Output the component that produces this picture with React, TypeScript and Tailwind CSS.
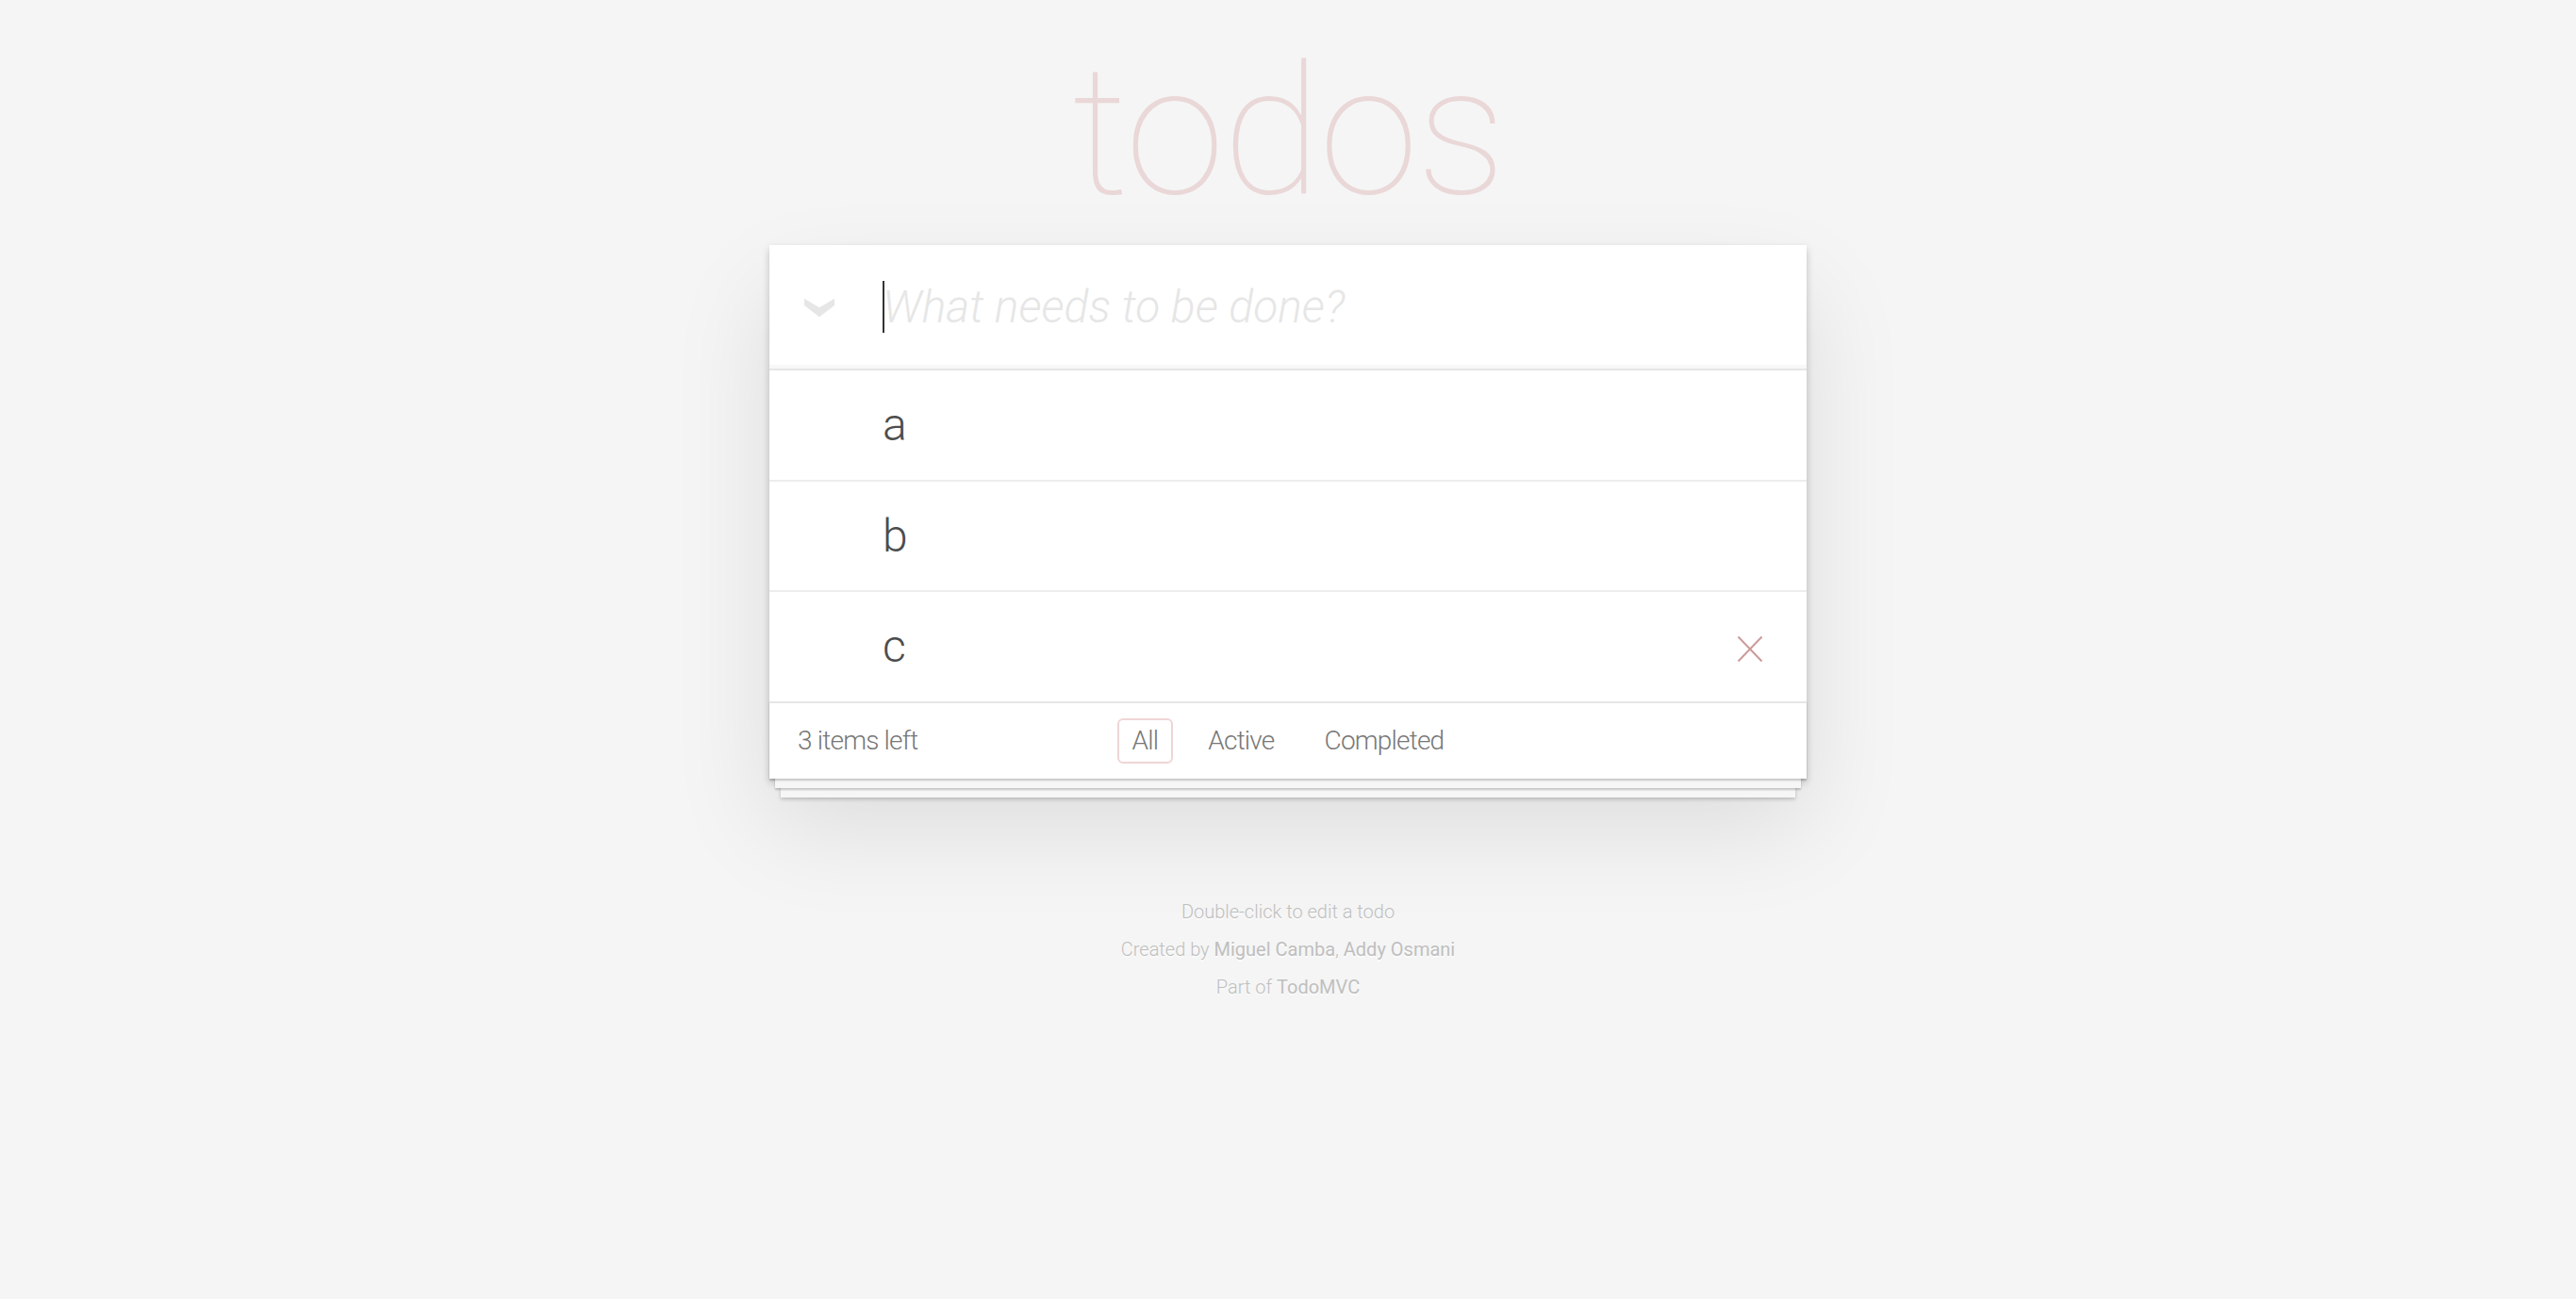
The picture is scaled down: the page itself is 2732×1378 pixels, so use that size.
import { useState } from "react";

type Todo = { id: number; title: string };

const initialTodos: Todo[] = [
  { id: 1, title: "a" },
  { id: 2, title: "b" },
  { id: 3, title: "c" },
];

function ToggleAll() {
  return (
    <svg width="32" height="21" viewBox="0 0 32 21" className="block">
      <polygon points="0,0.7 16,10.3 32,0.7 32,8 16,20.3 0,8" fill="#e6e6e6" />
    </svg>
  );
}

function DestroyIcon() {
  return (
    <svg width="26" height="27" viewBox="0 0 26 27" className="block">
      <line x1="0.5" y1="0.5" x2="25.5" y2="26.5" stroke="#cc9a9a" strokeWidth="2" />
      <line x1="25.5" y1="0.5" x2="0.5" y2="26.5" stroke="#cc9a9a" strokeWidth="2" />
    </svg>
  );
}

export default function App() {
  const [todos] = useState(initialTodos);
  const [filter, setFilter] = useState("All");
  const hoveredId = 3;

  return (
    <div className="min-h-screen bg-[#f5f5f5] [font-family:Roboto,Helvetica,Arial,sans-serif] font-light text-[#4d4d4d] text-[28px] leading-[39.2px]">
      <div className="mx-auto w-[1100px] pt-[45px]">
        <h1 className="mb-[24px] text-center text-[191px] leading-[191px] font-thin tracking-[-2px] text-[rgba(175,47,47,0.15)]">
          todos
        </h1>

        <section className="bg-white shadow-[0_4px_8px_0_rgba(0,0,0,0.2),0_50px_100px_0_rgba(0,0,0,0.1)]">
          {/* New todo */}
          <header className="flex h-[131px] items-center shadow-[inset_0_-4px_2px_rgba(0,0,0,0.03)]">
            <div className="w-[120px] pl-[37px] pt-[2px]">
              <ToggleAll />
            </div>
            <div className="relative h-full flex-1">
              <input
                className="h-full w-full bg-transparent pr-[32px] text-[48px] leading-[67.2px] outline-none placeholder:italic placeholder:font-light placeholder:text-[#e6e6e6]"
                placeholder="What needs to be done?"
              />
              <span className="absolute left-0 top-[38px] h-[55px] w-[2px] bg-[#333]" />
            </div>
          </header>

          {/* List */}
          <ul className="border-t-2 border-[#e6e6e6]">
            {todos.map((todo) => (
              <li key={todo.id} className="flex items-center border-b-2 border-[#ededed] last:border-b-0">
                <label className="flex-1 py-[29px] pl-[120px] text-[48px] leading-[57.6px] text-[#4d4d4d]">
                  {todo.title}
                </label>
                {todo.id === hoveredId && (
                  <button className="mr-[20px] flex h-[80px] w-[80px] items-center justify-center pt-[5px]">
                    <DestroyIcon />
                  </button>
                )}
              </li>
            ))}
          </ul>

          {/* Footer */}
          <footer className="grid h-[82px] grid-cols-[1fr_auto_1fr] items-center border-t-2 border-[#e6e6e6] px-[30px] tracking-[-0.8px] text-[#777] shadow-[0_2px_2px_rgba(0,0,0,0.2),0_16px_0_-6px_#f6f6f6,0_18px_2px_-6px_rgba(0,0,0,0.2),0_32px_0_-12px_#f6f6f6,0_34px_4px_-12px_rgba(0,0,0,0.2)]">
            <span className="text-left">{todos.length} items left</span>
            <ul className="flex gap-[9px]">
              {["All", "Active", "Completed"].map((f) => (
                <li key={f}>
                  <a
                    href="#"
                    onClick={(e) => {
                      e.preventDefault();
                      setFilter(f);
                    }}
                    className={
                      "m-[6px] block rounded-[6px] border-2 px-[14px] py-[6px] leading-[32px] " +
                      (filter === f ? "border-[rgba(175,47,47,0.2)]" : "border-transparent")
                    }
                  >
                    {f}
                  </a>
                </li>
              ))}
            </ul>
            <span />
          </footer>
        </section>

        {/* Info */}
        <footer className="mt-[131px] flex flex-col gap-[20px] text-center text-[20px] leading-[20px] text-[#bfbfbf] [text-shadow:0_2px_0_rgba(255,255,255,0.5)]">
          <p>Double-click to edit a todo</p>
          <p>
            Created by <a href="#" className="font-normal">Miguel Camba</a>, <a href="#" className="font-normal">Addy Osmani</a>
          </p>
          <p>
            Part of <a href="#" className="font-normal">TodoMVC</a>
          </p>
        </footer>
      </div>
    </div>
  );
}
